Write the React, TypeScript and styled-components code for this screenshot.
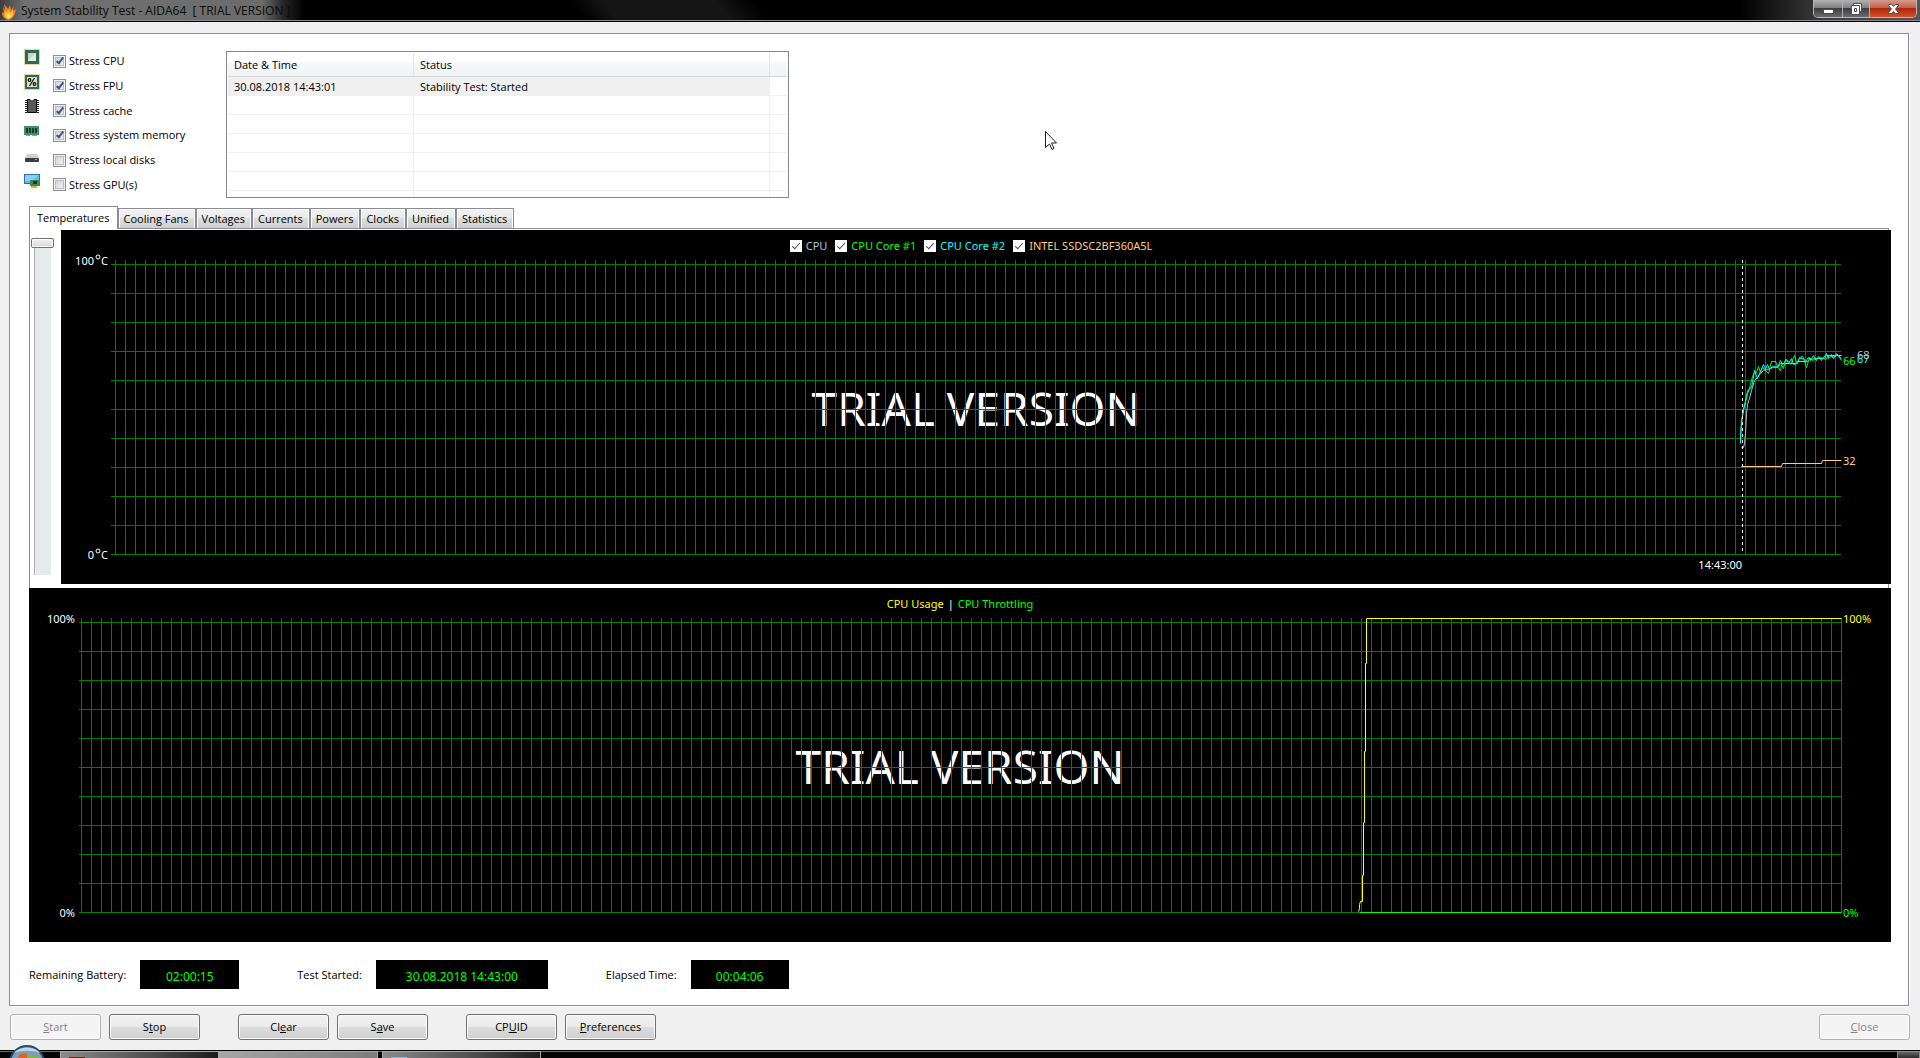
import React, { useLayoutEffect, useRef, useState } from "react";
import styled, { createGlobalStyle, css } from "styled-components";

const uiFont = `"Open Sans", "Noto Sans", sans-serif`;
const chartFont = `"Noto Sans", "Open Sans", sans-serif`;

const GlobalStyle = createGlobalStyle`
  *, *::before, *::after { box-sizing: border-box; }
  html, body { margin: 0; padding: 0; background: #000; }
  body { font: 11px/16px ${uiFont}; color: #000; }
  button, input { font: inherit; margin: 0; }
`;

/* ---------- window frame ---------- */

const Screen = styled.div`
  position: relative;
  display: flex;
  flex-direction: column;
  height: 100vh;
  min-width: 1000px;
  overflow: hidden;
`;

const TitleBar = styled.header`
  display: flex;
  justify-content: space-between;
  align-items: flex-start;
  height: 22px;
  flex: none;
  padding: 0 3px 0 1px;
  border-bottom: 1px solid #000;
  box-shadow: inset 0 -1px 0 #8c8890;
  background:
    linear-gradient(90deg, #3c3c3c 0, #707070 24px, #6c6c6c 262px, rgba(60, 60, 60, 0.6) 284px, transparent 304px),
    linear-gradient(50deg, transparent 450px, #151515 475px, #151515 560px, transparent 590px),
    linear-gradient(90deg, transparent calc(100% - 180px), #3a3a3a calc(100% - 100px), #555 100%),
    #000;
`;

const Caption = styled.div`
  display: flex;
  align-items: center;
  gap: 4px;
  height: 21px;
`;

const Title = styled.h1`
  margin: 0;
  font: 400 12px/20px ${uiFont};
  color: #0a0a0a;
  white-space: pre;
`;

const WindowButtons = styled.div`
  display: flex;
  height: 18px;
  border: 1px solid #b8b8b8;
  border-top: 0;
  border-radius: 0 0 5px 5px;
  overflow: hidden;
`;

const WindowButton = styled.button<{ $width: number; $danger?: boolean }>`
  display: flex;
  align-items: center;
  justify-content: center;
  width: ${(p) => p.$width}px;
  padding: 0;
  border: 0;
  border-right: 1px solid #b0b0b0;
  background: ${(p) =>
    p.$danger
      ? "linear-gradient(#d59a8c 0, #c4604c 45%, #a82408 46%, #d8502a 100%)"
      : "linear-gradient(#b2b2b2 0, #808080 45%, #3a3a3a 46%, #6a6a70 100%)"};
  &:last-child { border-right: 0; }
`;

const Client = styled.main`
  flex: none;
  display: flex;
  flex-direction: column;
  gap: 8px;
  padding: 11px 10px 10px 9px;
  background: #f0f0f0;
`;

const Panel = styled.section`
  border: 1px solid #898c95;
  box-shadow: 1px 1px 0 #fff;
  margin-right: 1px;
  background: #fff;
  padding: 17px 17px 16px 19px;
`;

/* ---------- stress options ---------- */

const TopRow = styled.div`
  display: flex;
  height: 147px;
  margin: 0 0 8px -5px;
`;

const IconColumn = styled.div`
  display: flex;
  flex-direction: column;
  justify-content: space-between;
  height: 139px;
  width: 29px;
  margin-top: -2px;
`;

const OptionColumn = styled.div`
  display: flex;
  flex-direction: column;
  justify-content: space-between;
  height: 144px;
  width: 173px;
`;

const Option = styled.label`
  display: flex;
  align-items: center;
  gap: 3px;
  height: 20px;
`;

const tick = css`
  appearance: none;
  display: inline-grid;
  place-items: center;
  flex: none;
  &::before {
    content: "";
    grid-area: 1 / 1;
  }
`;

const StressBox = styled.input`
  ${tick}
  width: 13px;
  height: 13px;
  border: 1px solid #8e8f8f;
  box-shadow: inset 0 0 0 1px #f4f4f4, inset 0 0 0 2px #b8bcc4;
  background: linear-gradient(135deg, #cbcfd5, #f6f6f6);
  &:checked::before {
    width: 4px;
    height: 8px;
    margin-bottom: 2px;
    border: solid #3f558f;
    border-width: 0 2px 2px 0;
    transform: rotate(38deg);
  }
`;

/* ---------- event log ---------- */

const LogFrame = styled.div`
  width: 563px;
  height: 147px;
  padding: 1px;
  border: 1px solid #828790;
  overflow: hidden;
`;

const LogTable = styled.table`
  width: 100%;
  table-layout: fixed;
  border-collapse: separate;
  border-spacing: 0;
  text-align: left;
`;

const LogHead = styled.th`
  height: 24px;
  padding: 0 6px;
  font-weight: 400;
  border-right: 1px solid #e2e3e6;
  border-bottom: 1px solid #d5d5d5;
  background: linear-gradient(#fff 0, #fff 40%, #f7f8fa 41%, #f1f2f4 100%);
  &:last-child { border-right: 0; }
`;

const LogCell = styled.td<{ $selected?: boolean }>`
  height: 19px;
  padding: 1px 6px 0;
  line-height: 16px;
  border-right: 1px solid #f0f0f0;
  border-bottom: 1px solid #f0f0f0;
  background: ${(p) => (p.$selected ? "#f0f0f0" : "#fff")};
  &:last-child { border-right: 0; }
`;

/* ---------- tabs ---------- */

const TabStrip = styled.div`
  display: flex;
  align-items: flex-end;
  height: 22px;
`;

const Tab = styled.button<{ $active?: boolean }>`
  padding: 0 6px 0 5px;
  height: 20px;
  color: #000;
  line-height: 16px;
  border: 1px solid #898c95;
  border-bottom: 0;
  box-shadow: inset 1px 1px 0 #fcfcfc, inset -1px 0 0 #fcfcfc;
  background: linear-gradient(#f2f2f2 0, #ebebeb 48%, #dddddd 49%, #cfcfcf 100%);
  ${(p) =>
    p.$active &&
    css`
      position: relative;
      height: 23px;
      margin-bottom: -1px;
      padding: 0 7px;
      background: #fff;
    `}
`;

const TabPage = styled.div`
  display: flex;
  margin-right: 2px;
  padding: 1px 0 4px 1px;
  border: 1px solid #898c95;
  border-bottom: 0;
`;

const ScaleColumn = styled.div`
  width: 30px;
  flex: none;
  padding-top: 8px;
`;

const ScaleSlider = styled.input`
  appearance: none;
  display: block;
  writing-mode: vertical-lr;
  direction: rtl;
  width: 23px;
  height: 337px;
  background: transparent;
  &::-webkit-slider-runnable-track {
    width: 17px;
    background: #e7eaea;
    box-shadow: inset 1px 0 0 #b0b0b0;
  }
  &::-webkit-slider-thumb {
    appearance: none;
    width: 23px;
    height: 10px;
    margin-left: -3px;
    border: 1px solid #707070;
    border-radius: 2px;
    background: linear-gradient(#f4f4f4, #d8d8d8);
    box-shadow: inset 0 0 0 1px #fff;
  }
`;

/* ---------- charts ---------- */

const ChartBox = styled.div<{ $overhang?: boolean }>`
  flex: 1;
  min-width: 0;
  margin-right: ${(p) => (p.$overhang ? -3 : 0)}px;
  padding: 0 50px 29px;
  background: #000;
  color: #fff;
  font: 11px/16px ${chartFont};
`;

const Legend = styled.div<{ $gap: number; $inset?: number }>`
  display: flex;
  justify-content: center;
  align-items: center;
  gap: ${(p) => p.$gap}px;
  height: 30px;
  padding-top: 2px;
  padding-right: ${(p) => p.$inset ?? 0}px;
  white-space: nowrap;
`;

const LegendItem = styled.label<{ $color: string }>`
  display: flex;
  align-items: center;
  gap: 4px;
  color: ${(p) => p.$color};
`;

const LegendText = styled.span<{ $color: string }>`
  color: ${(p) => p.$color};
`;

const LegendBox = styled.input`
  ${tick}
  width: 12px;
  height: 12px;
  background: #fff;
  &:checked::before {
    width: 4px;
    height: 8px;
    margin-bottom: 3px;
    border: solid #404040;
    border-width: 0 1px 1px 0;
    transform: rotate(42deg);
  }
`;

const PlotSvg = styled.svg`
  display: block;
  width: 100%;
  height: 295px;
  overflow: visible;
  fill: #fff;
`;

type Point = [number, number];

/* Samples are [pixels before the right edge, pixels below the plot's top]. */
const cpuTrace: Point[] = [
  [-100, 187], [-98, 187], [-97, 183], [-96, 173], [-95, 153], [-94, 144], [-92, 138], [-90, 130], [-87, 120],
  [-84, 117], [-81, 113], [-78, 110], [-73, 109], [-69, 107], [-63, 106], [-61, 103], [-46, 103], [-44, 101],
  [-34, 101], [-32, 99], [-25, 98], [-17, 98], [-15, 95], [0, 95],
];
const core1Trace: Point[] = [
  [-101, 180], [-100, 165], [-98, 148], [-96, 140], [-94, 130], [-93, 131], [-91, 124], [-89, 116], [-87, 112],
  [-85, 112], [-83, 106], [-81, 112], [-79, 107], [-76, 110], [-73, 113], [-70, 101], [-66, 101], [-63, 108],
  [-61, 110], [-60, 104], [-58, 108], [-56, 99], [-53, 101], [-51, 104], [-47, 95], [-45, 102], [-42, 98],
  [-38, 98], [-35, 107], [-32, 97], [-29, 100], [-24, 98], [-20, 97], [-16, 99], [-12, 95], [-8, 97], [-4, 94], [0, 98],
];
const core2Trace: Point[] = [
  [-101, 183], [-101, 175], [-100, 160], [-98, 150], [-96, 142], [-94, 133], [-92, 128], [-90, 127], [-89, 122],
  [-87, 110], [-84, 118], [-82, 113], [-78, 104], [-76, 109], [-74, 104], [-72, 109], [-69, 106], [-64, 107],
  [-61, 100], [-59, 104], [-55, 99], [-53, 103], [-50, 98], [-48, 104], [-44, 103], [-42, 97], [-39, 96],
  [-36, 101], [-33, 97], [-31, 100], [-28, 95], [-25, 100], [-23, 96], [-20, 100], [-18, 97], [-15, 93],
  [-13, 98], [-10, 94], [-8, 98], [-5, 93], [-2, 97], [0, 100],
];
const ssdTrace: Point[] = [[-100, 206], [-60, 206], [-59, 203], [-20, 203], [-19, 200], [0, 200]];
const usageTrace: Point[] = [
  [-483, 293], [-482, 290], [-482, 286], [-481, 283], [-479, 283], [-479, 257], [-478, 257], [-478, 204],
  [-477, 204], [-477, 133], [-476, 133], [-476, 45], [-475, 45], [-475, 0], [0, 0],
];
const throttleTrace: Point[] = [[-482, 294], [0, 294]];

function Trace({ points, color, right }: { points: Point[]; color: string; right: number }) {
  return (
    <polyline
      points={points.map(([x, y]) => `${right + x},${y}`).join(" ")}
      transform="translate(0.5 0.5)"
      fill="none"
      stroke={color}
      strokeWidth="1"
    />
  );
}

function Plot({
  label,
  lineOffset,
  children,
}: {
  label: string;
  lineOffset: number;
  children: (width: number) => React.ReactNode;
}) {
  const ref = useRef<SVGSVGElement>(null);
  const [width, setWidth] = useState(1730);

  useLayoutEffect(() => {
    const node = ref.current;
    if (!node) return;
    const measure = () => setWidth(Math.round(node.getBoundingClientRect().width));
    measure();
    const observer = new ResizeObserver(measure);
    observer.observe(node);
    return () => observer.disconnect();
  }, []);

  const columns: number[] = [];
  for (let x = width - lineOffset; x >= 2; x -= 10) columns.push(x);
  const rows = Array.from({ length: 11 }, (_, i) => 4 + i * 29);

  return (
    <PlotSvg ref={ref} role="img" aria-label={label}>
      <text x={width / 2} y="166" fontSize="46" textAnchor="middle">
        TRIAL VERSION
      </text>
      <g fill="#008000" shapeRendering="crispEdges">
        {columns.map((x) => (
          <rect key={x} x={x} y="0" width="1" height="295" />
        ))}
        {rows.map((y) => (
          <rect key={y} x="0" y={y} width={width} height="1" />
        ))}
      </g>
      {children(width)}
    </PlotSvg>
  );
}

function Degrees({ value, y }: { value: string; y: number }) {
  return (
    <g>
      <text x="-17" y={y} textAnchor="end">{value}</text>
      <circle cx="-13" cy={y - 8} r="2" fill="none" stroke="#fff" />
      <text x="-3" y={y} textAnchor="end">C</text>
    </g>
  );
}

const sensors = [
  { name: "CPU", color: "#b0c4de" },
  { name: "CPU Core #1", color: "#00ff00" },
  { name: "CPU Core #2", color: "#00ffff" },
  { name: "INTEL SSDSC2BF360A5L", color: "#ffcc80" },
];

function TemperatureChart() {
  return (
    <ChartBox $overhang>
      <Legend $gap={8} $inset={10}>
        {sensors.map((s) => (
          <LegendItem key={s.name} $color={s.color}>
            <LegendBox type="checkbox" defaultChecked />
            {s.name}
          </LegendItem>
        ))}
      </Legend>
      <Plot label="Temperatures" lineOffset={6}>
        {(w) => (
          <>
            <Degrees value="100" y={5} />
            <Degrees value="0" y={299} />
            <Trace points={cpuTrace} color="#b0c4de" right={w} />
            <Trace points={core1Trace} color="#00ff00" right={w} />
            <Trace points={core2Trace} color="#00ffff" right={w} />
            <Trace points={ssdTrace} color="#ffcc80" right={w} />
            <line
              x1={w - 99} x2={w - 99} y1="0" y2="292"
              transform="translate(0.5 0)"
              stroke="#fff" strokeDasharray="3 3"
            />
            <text x={w + 16} y="99" fill="#b0c4de">68</text>
            <text x={w + 16} y="103" fill="#00ffff">67</text>
            <text x={w + 2} y="105" fill="#00ff00">66</text>
            <text x={w + 2} y="205" fill="#ffcc80">32</text>
            <text x={w - 99} y="309" textAnchor="end">14:43:00</text>
          </>
        )}
      </Plot>
    </ChartBox>
  );
}

function UsageChart() {
  return (
    <ChartBox>
      <Legend $gap={4}>
        <LegendText $color="#ffff00">CPU Usage</LegendText>
        <LegendText $color="#ffffff">|</LegendText>
        <LegendText $color="#00ff00">CPU Throttling</LegendText>
      </Legend>
      <Plot label="CPU usage and throttling" lineOffset={0}>
        {(w) => (
          <>
            <text x="-4" y="5" textAnchor="end">100%</text>
            <text x="-4" y="299" textAnchor="end">0%</text>
            <Trace points={throttleTrace} color="#00ff00" right={w} />
            <Trace points={usageTrace} color="#ffff00" right={w} />
            <text x={w + 2} y="5" fill="#ffff00">100%</text>
            <text x={w + 2} y="299" fill="#00ff00">0%</text>
          </>
        )}
      </Plot>
    </ChartBox>
  );
}

/* ---------- status and buttons ---------- */

const StatusRow = styled.div`
  display: flex;
  gap: 58px;
  margin-top: 18px;
`;

const StatusItem = styled.div`
  display: flex;
  align-items: center;
  gap: 14px;
`;

const Readout = styled.output<{ $width: number }>`
  width: ${(p) => p.$width}px;
  height: 29px;
  padding-top: 4px;
  background: #000;
  color: #00ff00;
  font: 12px/25px ${chartFont};
  text-align: center;
`;

const ButtonRow = styled.div`
  display: flex;
  align-items: center;
  gap: 38px;
  padding-left: 1px;
`;

const ButtonPair = styled.div`
  display: flex;
  gap: 8px;
  &:last-child { margin-left: auto; }
`;

const PushButton = styled.button`
  width: 91px;
  height: 26px;
  padding: 0;
  color: #000;
  border: 1px solid #707070;
  border-radius: 3px;
  box-shadow: inset 0 0 0 1px #fcfcfc;
  background: linear-gradient(#f2f2f2 0, #ebebeb 48%, #dddddd 49%, #cfcfcf 100%);
  &:disabled {
    color: #838383;
    border-color: #adb2b5;
    background: #f4f4f4;
  }
`;

/* ---------- desktop task bar ---------- */

const TaskBar = styled.footer`
  position: relative;
  display: flex;
  flex: 1;
  min-height: 8px;
  padding-left: 60px;
  border-top: 1px solid #000;
  box-shadow: inset 0 1px 0 #6e6e6e;
  background: #050505;
`;

const TaskButton = styled.div<{ $light?: boolean; $gap?: boolean }>`
  width: 159px;
  margin-left: ${(p) => (p.$gap ? 4 : 0)}px;
  border: solid #a8a8a8;
  border-width: 1px 1px 0;
  background: ${(p) =>
    p.$light ? "linear-gradient(90deg, #a6a6a6, #7c7c7c)" : "linear-gradient(90deg, #8a8a8a, #4c4c4c 60%, #1c1c1c)"};
`;

const TaskMark = styled.div<{ $color: string }>`
  width: 16px;
  height: 1px;
  margin: 5px 0 0 8px;
  background: ${(p) => p.$color};
`;

const ShowDesktop = styled.div`
  width: 23px;
  margin-left: auto;
  border: 1px solid #8a8a8a;
  border-bottom: 0;
  background: linear-gradient(#666, #2a2a2a);
`;

const Orb = styled.svg`
  position: absolute;
  left: 9px;
  top: -6px;
`;

const Pointer = styled.svg`
  position: absolute;
  left: 1045px;
  top: 131px;
`;

/* ---------- icons ---------- */

function FlameIcon() {
  return (
    <svg width="16" height="20" viewBox="0 0 16 20" aria-hidden="true">
      <path d="M2 6 4 9 3 3 7 8 9 4 10 9 13 5 12 10 15 8C14 15 11 19 7 19 3 18 1 15 1 11L3 12Z" fill="#f08020" />
      <path d="M4 10 6 12 7 8 9 12 12 9C13 15 10 18 7 18 4 17 3 14 4 10Z" fill="#ffc63a" />
      <path d="M6 15 8 13 9 15C9 17 7 18 6 15Z" fill="#fff3a0" />
    </svg>
  );
}

function ChipIcon({ percent }: { percent?: boolean }) {
  return (
    <svg width="16" height="16" viewBox="0 0 16 16" aria-hidden="true">
      <rect x="0.5" y="0.5" width="15" height="15" fill="none" stroke="#c8a850" strokeDasharray="1 1" />
      <rect x="1" y="1" width="14" height="14" fill="#2f6b48" />
      {percent ? (
        <>
          <rect x="3" y="3" width="10" height="10" fill="#d8dcd0" />
          <g fill="none" stroke="#111" strokeWidth="1.2">
            <circle cx="5.5" cy="6" r="1.3" />
            <circle cx="10.5" cy="10" r="1.3" />
            <path d="M10.5 4 5.5 12" />
          </g>
        </>
      ) : (
        <>
          <rect x="4" y="4" width="8" height="8" fill="#e8e8e8" />
          <path d="M4 12V4H12Z" fill="#d0d0d0" />
        </>
      )}
    </svg>
  );
}

function CacheIcon() {
  return (
    <svg width="16" height="16" viewBox="0 0 16 16" aria-hidden="true">
      <path d="M2 2V15M14 2V15" stroke="#222" strokeWidth="2" strokeDasharray="1 1" shapeRendering="crispEdges" />
      <path d="M3.5 1.5H6L8 3.5 10 1.5H12.5V14.5H3.5Z" fill="#5a5a5a" stroke="#0c0c0c" />
    </svg>
  );
}

function MemoryIcon() {
  return (
    <svg width="16" height="16" viewBox="0 0 16 16" aria-hidden="true">
      <rect x="0" y="3" width="15" height="9" fill="#3d9466" />
      <path d="M2 5h2v5H2zM5 5h2v5H5zM8 5h2v5H8zM11 5h2v5h-2z" fill="#1d3a2c" />
      <path d="M2 12h4v1H2zM8 12h5v1H8z" fill="#d88838" />
    </svg>
  );
}

function DiskIcon() {
  return (
    <svg width="16" height="16" viewBox="0 0 16 16" aria-hidden="true">
      <path d="M3 7H13L15 11H1Z" fill="#cfcfcf" />
      <rect x="1" y="11" width="14" height="4" rx="1" fill="#3c3c3c" />
      <rect x="11" y="12" width="2" height="1" fill="#4cf04c" />
    </svg>
  );
}

function DisplayIcon() {
  return (
    <svg width="16" height="16" viewBox="0 0 16 16" aria-hidden="true">
      <rect x="0.5" y="2.5" width="15" height="9" fill="#5cb8f4" stroke="#2f6ea8" />
      <path d="M1 3H15L8 9H1Z" fill="#86d0ff" />
      <rect x="6" y="8" width="10" height="6" fill="#3a8a58" />
      <rect x="9" y="9" width="4" height="3" fill="#1c3a2a" />
      <path d="M7 14H13V16H7Z" fill="#e8b020" />
    </svg>
  );
}

const options = [
  { name: "Stress CPU", icon: <ChipIcon />, on: true },
  { name: "Stress FPU", icon: <ChipIcon percent />, on: true },
  { name: "Stress cache", icon: <CacheIcon />, on: true },
  { name: "Stress system memory", icon: <MemoryIcon />, on: true },
  { name: "Stress local disks", icon: <DiskIcon />, on: false },
  { name: "Stress GPU(s)", icon: <DisplayIcon />, on: false },
];

const tabs = ["Temperatures", "Cooling Fans", "Voltages", "Currents", "Powers", "Clocks", "Unified", "Statistics"];

export default function App() {
  return (
    <Screen>
      <GlobalStyle />
      <TitleBar>
        <Caption>
          <FlameIcon />
          <Title>{"System Stability Test - AIDA64  [ TRIAL VERSION ]"}</Title>
        </Caption>
        <WindowButtons>
          <WindowButton $width={29} aria-label="Minimize">
            <svg width="13" height="16" viewBox="0 0 13 16">
              <rect x="1.5" y="8.5" width="10" height="4" fill="#fff" stroke="#4a4a58" />
            </svg>
          </WindowButton>
          <WindowButton $width={27} aria-label="Restore">
            <svg width="13" height="14" viewBox="0 0 13 14">
              <path d="M3.5 1.5H11.5V9.5H3.5Z" fill="#fff" stroke="#4a4a58" />
              <path d="M1.5 3.5H9.5V12.5H1.5ZM4.500 6.500V9.500H6.500V6.500Z" fill="#fff" fillRule="evenodd" stroke="#4a4a58" />
            </svg>
          </WindowButton>
          <WindowButton $width={46} $danger aria-label="Close window">
            <svg width="13" height="12" viewBox="0 0 13 12">
              <path
                d="M1.500 1.500H4.500L6.500 3.500 8.500 1.500H11.500V2.500L8.500 6 11.500 9.500V10.500H8.500L6.500 8.500 4.500 10.500H1.500V9.500L4.500 6 1.500 2.500Z"
                fill="#fff"
                stroke="#4a4a58"
              />
            </svg>
          </WindowButton>
        </WindowButtons>
      </TitleBar>

      <Client>
        <Panel>
          <TopRow>
            <IconColumn>
              {options.map((o) => (
                <React.Fragment key={o.name}>{o.icon}</React.Fragment>
              ))}
            </IconColumn>
            <OptionColumn>
              {options.map((o) => (
                <Option key={o.name}>
                  <StressBox type="checkbox" defaultChecked={o.on} />
                  {o.name}
                </Option>
              ))}
            </OptionColumn>
            <LogFrame>
              <LogTable>
                <colgroup>
                  <col width="186" />
                  <col width="356" />
                  <col />
                </colgroup>
                <thead>
                  <tr>
                    <LogHead scope="col">Date &amp; Time</LogHead>
                    <LogHead scope="col">Status</LogHead>
                    <LogHead aria-hidden="true" />
                  </tr>
                </thead>
                <tbody>
                  <tr>
                    <LogCell $selected>30.08.2018 14:43:01</LogCell>
                    <LogCell $selected>Stability Test: Started</LogCell>
                    <LogCell />
                  </tr>
                  {[0, 1, 2, 3, 4, 5].map((i) => (
                    <tr key={i}>
                      <LogCell />
                      <LogCell />
                      <LogCell />
                    </tr>
                  ))}
                </tbody>
              </LogTable>
            </LogFrame>
          </TopRow>

          <TabStrip role="tablist">
            {tabs.map((t, i) => (
              <Tab key={t} role="tab" aria-selected={i === 0} $active={i === 0}>
                {t}
              </Tab>
            ))}
          </TabStrip>
          <TabPage role="tabpanel">
            <ScaleColumn>
              <ScaleSlider type="range" min="0" max="100" defaultValue="100" aria-label="Scale" />
            </ScaleColumn>
            <TemperatureChart />
          </TabPage>
          <UsageChart />

          <StatusRow>
            <StatusItem>
              <label htmlFor="battery">Remaining Battery:</label>
              <Readout id="battery" $width={99}>02:00:15</Readout>
            </StatusItem>
            <StatusItem>
              <label htmlFor="started">Test Started:</label>
              <Readout id="started" $width={172}>30.08.2018 14:43:00</Readout>
            </StatusItem>
            <StatusItem>
              <label htmlFor="elapsed">Elapsed Time:</label>
              <Readout id="elapsed" $width={98}>00:04:06</Readout>
            </StatusItem>
          </StatusRow>
        </Panel>

        <ButtonRow>
          <ButtonPair>
            <PushButton disabled><u>S</u>tart</PushButton>
            <PushButton>S<u>t</u>op</PushButton>
          </ButtonPair>
          <ButtonPair>
            <PushButton>Cl<u>e</u>ar</PushButton>
            <PushButton>S<u>a</u>ve</PushButton>
          </ButtonPair>
          <ButtonPair>
            <PushButton>CP<u>U</u>ID</PushButton>
            <PushButton><u>P</u>references</PushButton>
          </ButtonPair>
          <ButtonPair>
            <PushButton disabled><u>C</u>lose</PushButton>
          </ButtonPair>
        </ButtonRow>
      </Client>

      <TaskBar>
        <Orb width="36" height="14" viewBox="0 0 36 14" aria-hidden="true">
          <circle cx="18" cy="18" r="17" fill="#7f9fb8" stroke="#1f4f78" strokeWidth="2" />
          <path d="M5 8C10 1 26 1 31 8 24 5 12 5 5 8Z" fill="#c4d6e4" />
          <path d="M10 10C13 8 16 8 18 9V14H9Z" fill="#e0622a" />
          <path d="M19 10C22 12 26 11 29 10L30 14H19Z" fill="#7fb648" />
        </Orb>
        <TaskButton><TaskMark $color="#c00000" /></TaskButton>
        <TaskButton $light />
        <TaskButton $gap><TaskMark $color="#30e0f0" /></TaskButton>
        <ShowDesktop />
      </TaskBar>

      <Pointer width="13" height="20" viewBox="0 0 13 20" aria-hidden="true">
        <path d="M0.500 0.500V16.500L4.500 13 7 18.500 9 17.500 6.500 12H11.500Z" fill="#fff" stroke="#222" />
      </Pointer>
    </Screen>
  );
}
